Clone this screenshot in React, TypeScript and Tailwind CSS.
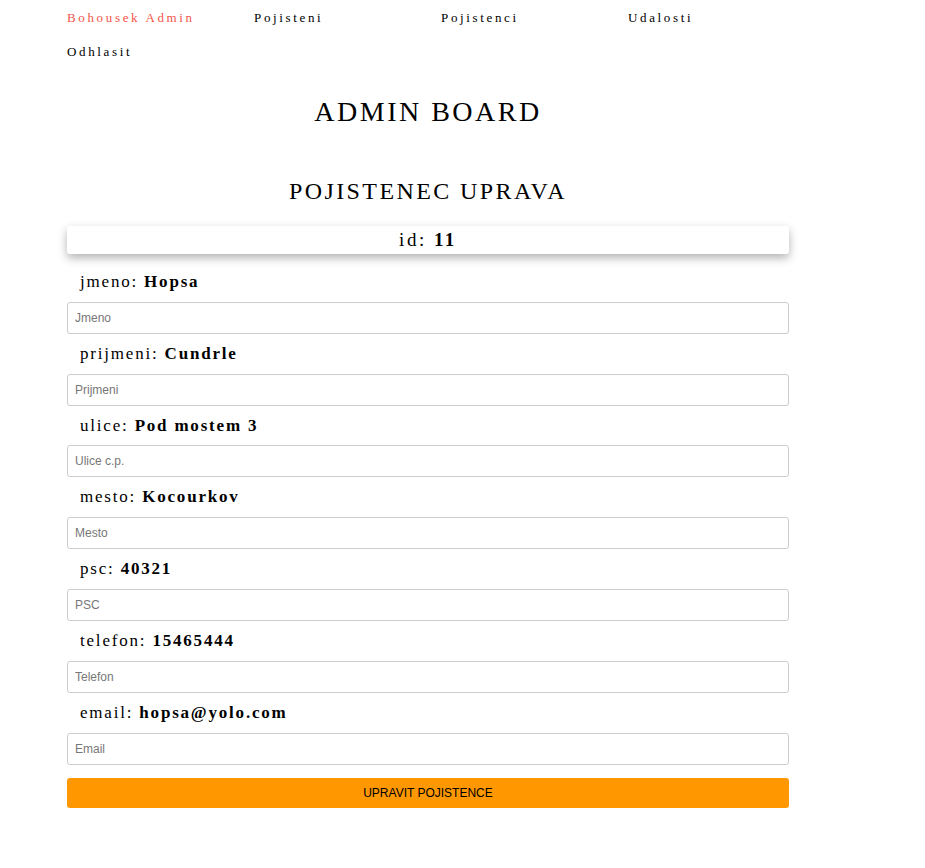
const navItems = ["Pojisteni", "Pojistenci", "Udalosti", "Odhlasit"]

const fields = [
  { label: "jmeno", value: "Hopsa", placeholder: "Jmeno" },
  { label: "prijmeni", value: "Cundrle", placeholder: "Prijmeni" },
  { label: "ulice", value: "Pod mostem 3", placeholder: "Ulice c.p." },
  { label: "mesto", value: "Kocourkov", placeholder: "Mesto" },
  { label: "psc", value: "40321", placeholder: "PSC" },
  { label: "telefon", value: "15465444", placeholder: "Telefon" },
  { label: "email", value: "hopsa@yolo.com", placeholder: "Email" },
]

export default function App() {
  return (
    <div className="min-h-screen bg-white font-['Liberation_Serif',serif] text-black">
      <div className="w-[722px] ml-[67px] pt-[1px]">
        {/* navigace */}
        <nav className="flex flex-wrap w-[760px] text-[13px] tracking-[2.65px]">
          <a className="w-[187px] h-[34px] leading-[34px] text-[#f4554a]">Bohousek Admin</a>
          {navItems.map((item) => (
            <a key={item} className="w-[187px] h-[34px] leading-[34px]">
              {item}
            </a>
          ))}
        </nav>

        <h1 className="mt-[27px] text-center text-[28px] tracking-[2.5px] leading-[32px]">ADMIN BOARD</h1>
        <h2 className="mt-[49px] text-center text-[24px] tracking-[2.4px] leading-[28px]">POJISTENEC UPRAVA</h2>

        <div className="mt-[21px] h-[28px] rounded-[3px] bg-white shadow-[0_4px_10px_rgba(0,0,0,0.3)] text-center text-[19px] tracking-[2.5px] leading-[28px]">
          id: <b>11</b>
        </div>

        <form className="mt-[12px]">
          {fields.map((f) => (
            <div key={f.label}>
              <div className="pl-[13px] h-[35.8px] leading-[31px] text-[17px] tracking-[1.8px]">
                {f.label}: <b>{f.value}</b>
              </div>
              <input
                placeholder={f.placeholder}
                className="block w-full h-[32px] px-[7px] mb-[4px] rounded-[3px] border border-[#cccccc] font-['Liberation_Sans',sans-serif] text-[12px] placeholder:text-[#777]"
              />
            </div>
          ))}
          <button
            type="button"
            className="block w-full h-[30px] mt-[13px] rounded-[3px] bg-[#ff9800] font-['Liberation_Sans',sans-serif] text-[12px] text-black"
          >
            UPRAVIT POJISTENCE
          </button>
        </form>
      </div>
    </div>
  )
}
